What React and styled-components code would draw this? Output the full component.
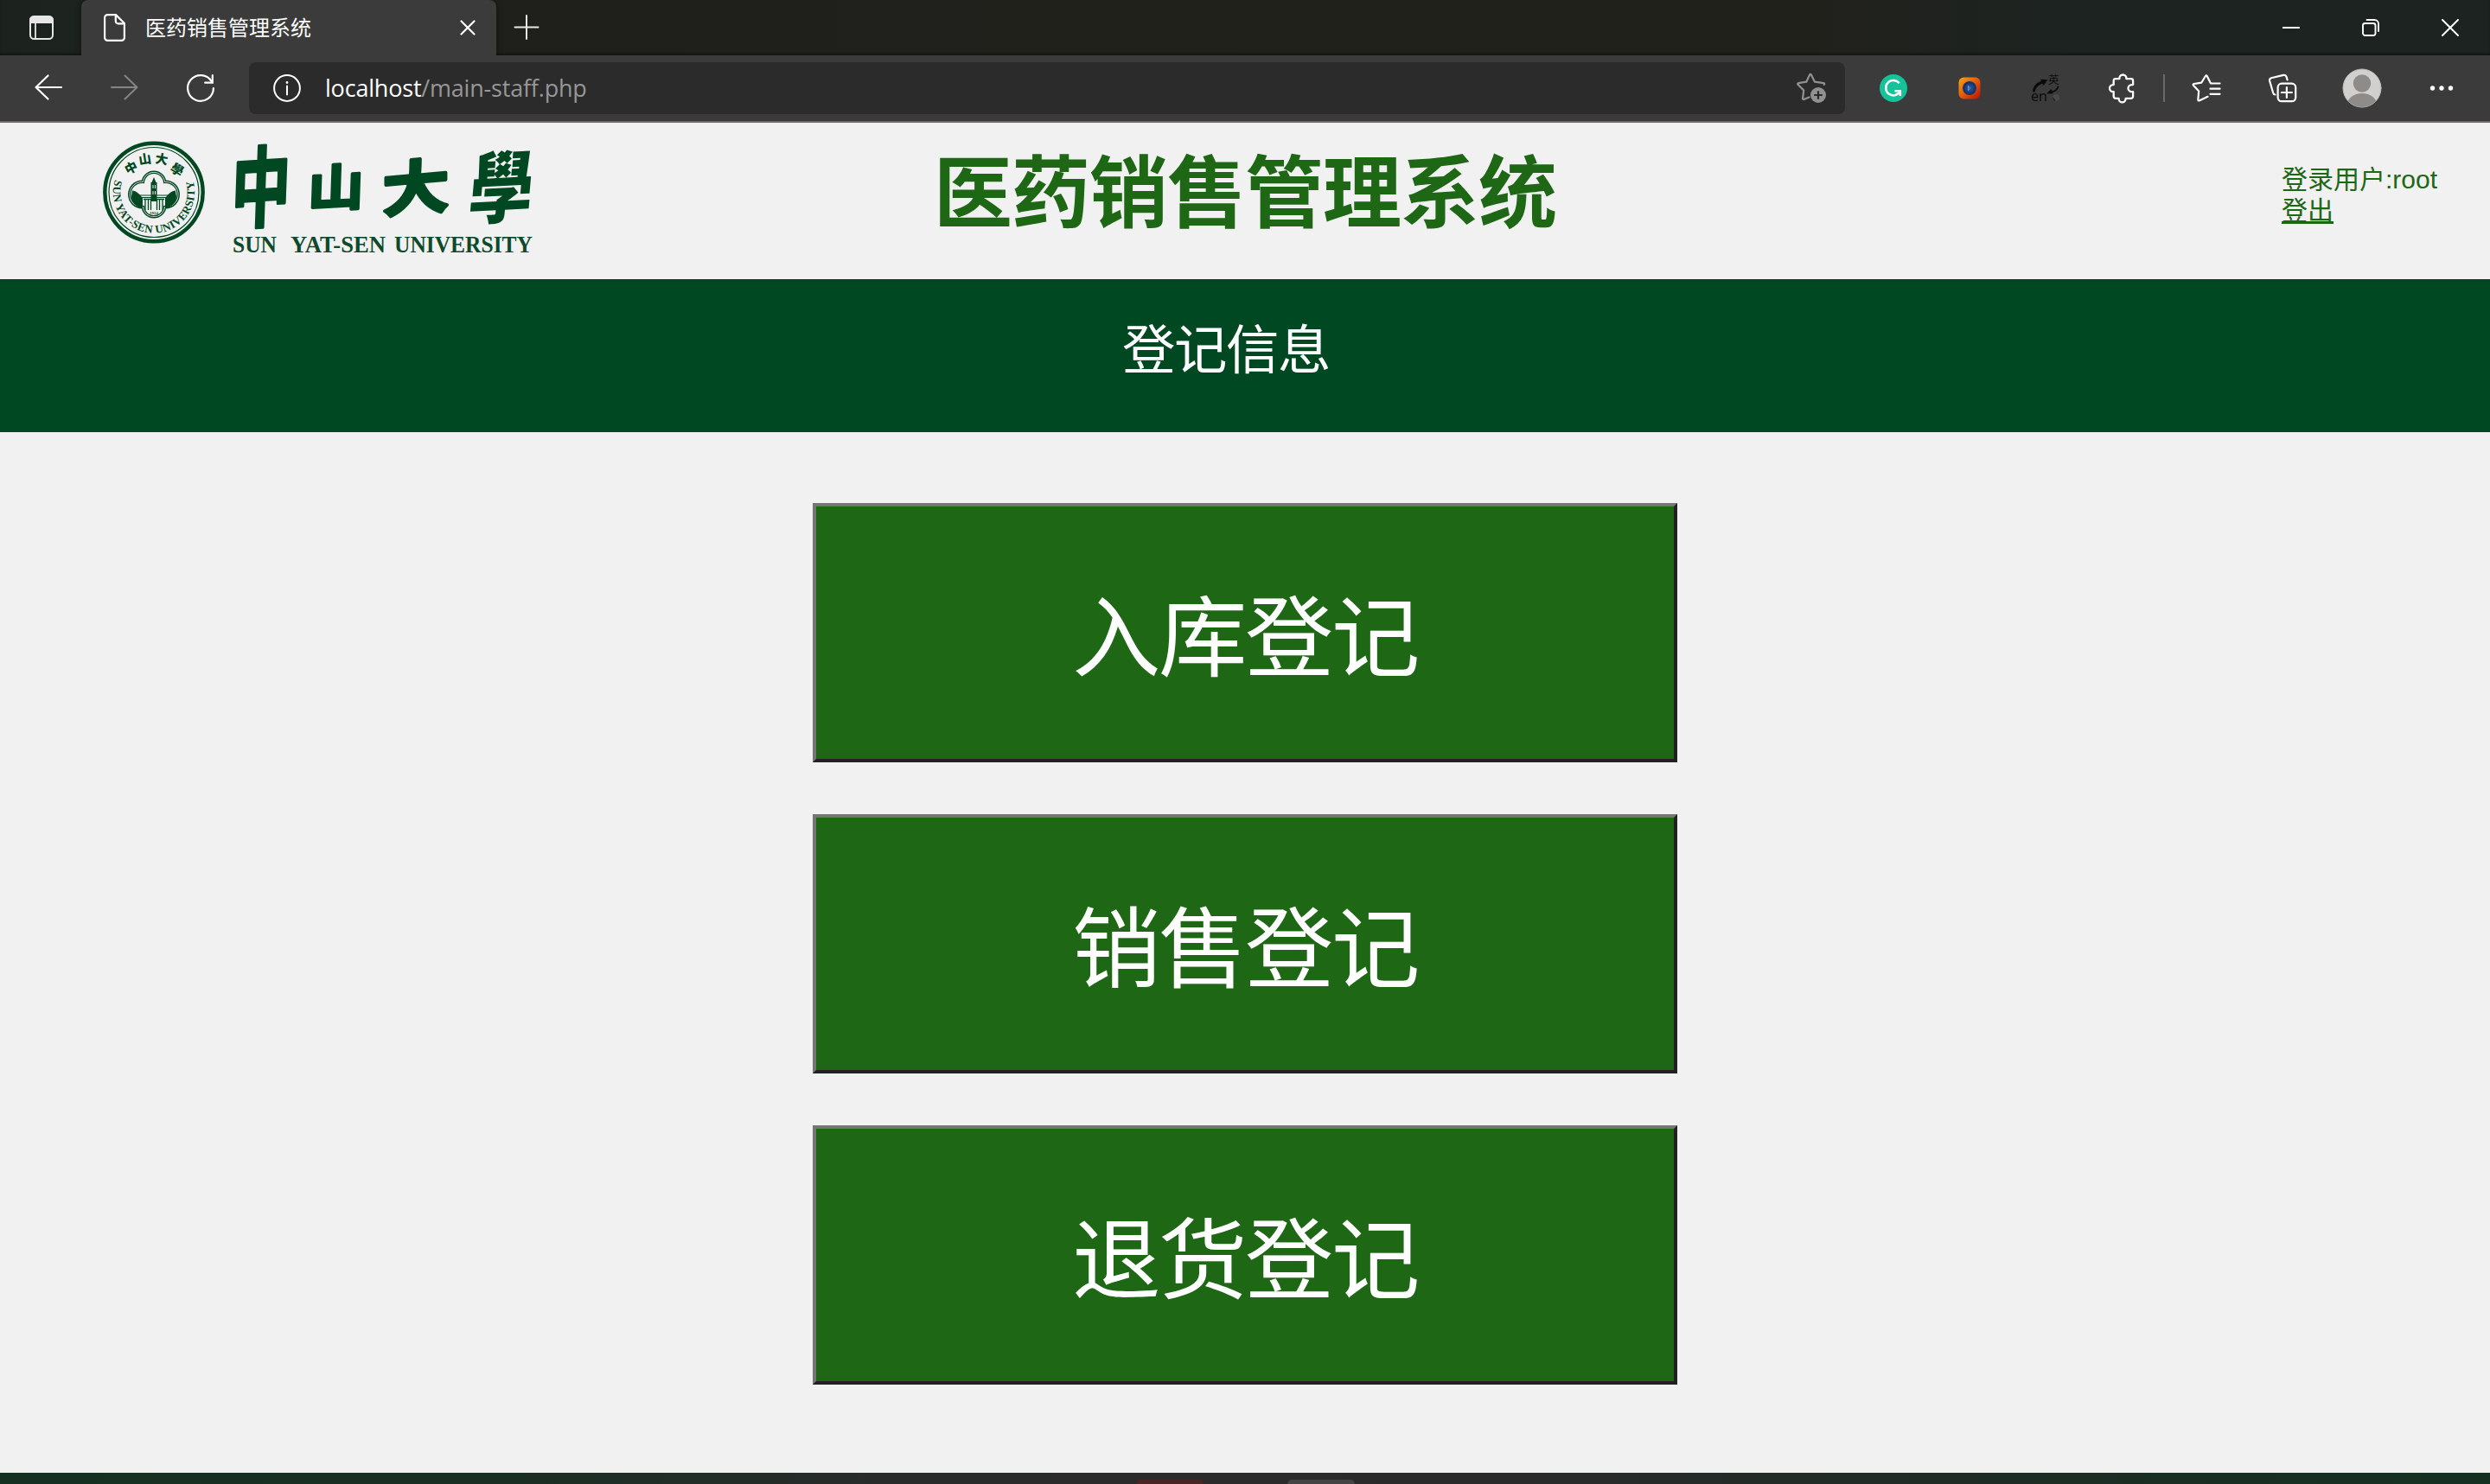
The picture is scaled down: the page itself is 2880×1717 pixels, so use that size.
import React from "react";
import styled, { createGlobalStyle } from "styled-components";

const CJK = '"Noto Sans CJK SC", sans-serif';

const GlobalStyle = createGlobalStyle`
  html, body { margin: 0; padding: 0; background: #f1f1f1; }
  * { box-sizing: border-box; }
  svg { overflow: visible; }
`;

const Screen = styled.div`
  width: 2880px;
  height: 1717px;
  display: flex;
  flex-direction: column;
  overflow: hidden;
  background: #f1f1f1;
`;

/* ---------- browser chrome ---------- */

const TitleBar = styled.div`
  height: 64px;
  flex: none;
  display: flex;
  background: linear-gradient(90deg, #1c231f 0%, #1f201b 20%, #21211b 72%, #1c2321 84%, #1c2321 100%);
  box-shadow: inset 0 -3px 3px -1px rgba(0, 0, 0, 0.4);
`;

const TitleSlot = styled.div`
  width: ${(p) => p.$w}px;
  padding-left: ${(p) => p.$left}px;
  display: flex;
  align-items: center;
`;

const Tab = styled.div`
  width: 480px;
  height: 64px;
  display: flex;
  align-items: center;
  padding: 0 24px 0 26px;
  background: #3b3b3b;
  border-radius: 8px 8px 0 0;
  box-shadow: 0 0 6px rgba(0, 0, 0, 0.5);
`;

const TabTitle = styled.span`
  flex: 1;
  margin-left: 23px;
  padding-bottom: 2px;
  font: 400 24px/32px ${CJK};
  color: #fff;
`;

const Spacer = styled.div`
  flex: 1;
`;

const ToolBar = styled.div`
  height: 78px;
  flex: none;
  display: flex;
  align-items: center;
  padding: 0 12px;
  background: #3b3b3b;
  border-bottom: 2px solid #6b6969;
  position: relative;
`;

const Slot = styled.div`
  width: ${(p) => p.$w || 88}px;
  height: 60px;
  display: flex;
  align-items: center;
  justify-content: center;
`;

const Address = styled.div`
  width: 1846px;
  height: 60px;
  margin: 0 12px;
  padding: 0 20px 0 28px;
  display: flex;
  align-items: center;
  background: #2b2b2b;
  border-radius: 8px;
`;

const Url = styled.span`
  flex: 1;
  margin-left: 28px;
  font: 400 27px/36px "Open Sans", "Noto Sans", sans-serif;
  letter-spacing: -0.2px;
  color: #979797;
`;

const Host = styled.span`
  color: #fff;
`;

const Divider = styled.div`
  width: 2px;
  height: 32px;
  margin: 0 4px;
  background: #6a6a6a;
`;

/* ---------- page ---------- */

const Header = styled.header`
  height: 181px;
  flex: none;
  display: grid;
  grid-template-columns: 1080px 720px 1080px;
`;

const LogoBox = styled.div`
  padding-left: 100px;
`;

const Title = styled.h1`
  margin: 0;
  padding-top: 9px;
  white-space: nowrap;
  font: 700 91px/130px ${CJK};
  letter-spacing: -1px;
  color: #1e6715;
`;

const User = styled.div`
  padding: 48px 0 0 839px;
  font: 400 30px/36px "Liberation Sans", ${CJK};
  color: #1e6715;
`;

const Line = styled.div`
  height: 36px;
  white-space: nowrap;
`;

const Logout = styled.a`
  color: inherit;
  text-decoration: underline;
  text-decoration-thickness: 3px;
  text-underline-offset: 2px;
  text-decoration-skip-ink: none;
`;

const Band = styled.div`
  height: 177px;
  flex: none;
  padding: 34px 0 0 1298px;
  background: #004822;
  font: 400 61.5px/88px ${CJK};
  letter-spacing: -1.5px;
  color: #fff;
`;

const Main = styled.main`
  flex: 1;
  display: flex;
  flex-direction: column;
  align-items: center;
  gap: 60px;
  padding-top: 82px;
`;

const BigButton = styled.button`
  width: 1000px;
  height: 300px;
  padding: 0 0 2px;
  border: 4px solid;
  border-color: #767676 #212121 #212121 #767676;
  background: #1e6715;
  color: #fff;
  font: 400 102.5px/140px ${CJK};
  letter-spacing: -2.5px;
`;

const TaskBar = styled.div`
  height: 13px;
  flex: none;
  display: flex;
  align-items: flex-end;
  padding-left: 1314px;
  gap: 97px;
  background: linear-gradient(90deg, #143021 0%, #1a2e23 20%, #292b2a 36%, #2a2a2a 60%, #1d2c24 80%, #143021 100%);
`;

const TaskItem = styled.div`
  width: 78px;
  height: 5px;
  border-radius: 5px 5px 0 0;
  background: ${(p) => p.$color};
`;

/* ---------- icons ---------- */

const Icon = ({ w = 32, h = 32, sw = 2.2, color = "#fff", children }) => (
  <svg
    width={w}
    height={h}
    viewBox={`0 0 ${w} ${h}`}
    fill="none"
    stroke={color}
    strokeWidth={sw}
    strokeLinecap="round"
    strokeLinejoin="round"
  >
    {children}
  </svg>
);

const TabActionsIcon = () => (
  <Icon w={28} h={28} sw={2} color="#e6e6e6">
    <rect x="1" y="1" width="26" height="26" rx="4.5" />
    <path d="M1 8V5.5A4.5 4.5 0 0 1 5.5 1h17A4.5 4.5 0 0 1 27 5.5V8z" fill="#e6e6e6" />
    <path d="M7 8v18" strokeWidth="1.8" />
  </Icon>
);

const PageIcon = () => (
  <Icon w={25} h={32}>
    <path d="M4.5 1.1H14L23.9 11v16.5a3.4 3.4 0 0 1-3.4 3.4h-16a3.4 3.4 0 0 1-3.4-3.4v-23a3.4 3.4 0 0 1 3.4-3.4z" />
    <path d="M13.8 1.5V8.500a2.800 2.800 0 0 0 2.800 2.800h7" />
  </Icon>
);

const BackIcon = () => (
  <Icon w={32} h={30}>
    <path d="M15.500 .5L1.500 14l14 13.500M1.500 14H31" />
  </Icon>
);

const ForwardIcon = () => (
  <Icon w={32} h={30} color="#858585" sw={2}>
    <path d="M16.500 .5L30.500 14l-14 13.500M30.500 14H1" />
  </Icon>
);

const RefreshIcon = () => (
  <Icon>
    <path d="M30.900 16A14.900 14.900 0 1 1 29 8.700" />
    <path d="M29.800 1v8.700h-8.600" strokeLinejoin="miter" />
  </Icon>
);

const InfoIcon = () => (
  <Icon sw={2}>
    <circle cx="16" cy="16" r="14.900" />
    <path d="M16 13.500V23.500" />
    <circle cx="16" cy="9.500" r="0.600" fill="#fff" strokeWidth="1.600" />
  </Icon>
);

const AddFavoriteIcon = () => (
  <Icon w={36} h={36} color="#919191">
    <path d="M14.500 28.500L8.500 31a1 1 0 0 1-1.400-1L8.200 20.500 1.500 13.800a1 1 0 0 1 .6-1.700L11.300 10.700 15.100 2.500a1 1 0 0 1 1.800 0L21 10.700l10.200 1.400a1 1 0 0 1 .6 1.800" />
    <circle cx="25" cy="26" r="9" fill="#919191" stroke="none" />
    <path d="M25 21.200v9.600M20.200 26h9.600" stroke="#2b2b2b" strokeLinecap="butt" />
  </Icon>
);

const GrammarIcon = () => (
  <Icon>
    <circle cx="16" cy="16" r="16" fill="#15c39a" stroke="none" />
    <path d="M22.700 10.200A8.700 8.700 0 1 0 23.700 19.500" strokeWidth="2.600" strokeLinecap="butt" />
    <path d="M17.500 19.200h6.300v5.800" strokeWidth="2.600" strokeLinecap="butt" strokeLinejoin="miter" />
  </Icon>
);

const CameraIcon = () => (
  <Icon w={26} h={26} sw={1.5}>
    <defs>
      <linearGradient id="cam" x1="0" y1="0" x2="1" y2="1">
        <stop offset="0" stopColor="#f8a51a" />
        <stop offset="0.5" stopColor="#e35a0c" />
        <stop offset="1" stopColor="#b80e06" />
      </linearGradient>
    </defs>
    <rect x="0.500" y="0.500" width="25" height="25" rx="6" fill="url(#cam)" stroke="none" />
    <circle cx="13" cy="13" r="8" fill="#1c3464" stroke="none" />
    <circle cx="13" cy="13" r="4.700" fill="#1c4b94" stroke="#20407c" />
    <path d="M11.800 10.600a2.600 2.600 0 0 1 0 4.800z" stroke="#6f9ad0" strokeWidth="1" />
  </Icon>
);

const TranslateIcon = () => (
  <Icon w={34} h={34} color="#0a0a0a">
    <text x="20" y="12" fontSize="12.500" fill="#0a0a0a" stroke="none" fontFamily='"Noto Sans CJK SC", sans-serif'>英</text>
    <text x="0" y="32" fontSize="16" fill="#0a0a0a" stroke="none" fontFamily='"Open Sans", sans-serif'>en</text>
    <path d="M3.500 20C4 15.500 8 12 13 10" strokeWidth="3" />
    <path d="M11 6.800L19.500 7.200 14.500 14z" fill="#0a0a0a" stroke="none" />
    <path d="M31.500 15.500C30.500 19 27 20.800 23 22" strokeWidth="1.800" />
    <path d="M23.500 18L18 23.500l7.500-.3z" fill="#0a0a0a" stroke="none" />
    <circle cx="29" cy="28" r="4" fill="#4d4a43" stroke="none" />
    <path d="M25.300 27a4 4 0 0 0 3.500 5z" fill="#1d1c1a" stroke="none" />
  </Icon>
);

const PuzzleIcon = () => (
  <Icon w={30} h={34} sw={2.300}>
    <path d="M8 6.200h4.400V5.500a4 4 0 0 1 8 0v.7h5.400a2.300 2.300 0 0 1 2.300 2.300v4.600h-1.600a4 4 0 0 0 0 8h1.600v5.400a2.300 2.300 0 0 1-2.300 2.300H19.600v.5a4 4 0 0 1-8 0v-.5H8a2.300 2.300 0 0 1-2.300-2.300V21.100H5a4 4 0 0 1 0-8h.7V8.500A2.300 2.300 0 0 1 8 6.200z" />
  </Icon>
);

const FavoritesIcon = () => (
  <Icon w={34} h={34}>
    <path d="M18.500 26.800L8.700 31.400a1 1 0 0 1-1.400-1L8.200 20.500 1.900 13.700a1 1 0 0 1 .5-1.700L11.200 10.700 15.900 3a1 1 0 0 1 1.800 0L22 11.500H32.500M21.500 17.700h11M21.500 23.800h11" />
  </Icon>
);

const CollectionsIcon = () => (
  <Icon w={34} h={34}>
    <path d="M8.500 24.500A2.500 2.500 0 0 1 6.200 22.500L2.100 8.500A2.800 2.800 0 0 1 4 5.200L18 1.900a3 3 0 0 1 3.600 2L22.600 7.500" />
    <rect x="11.600" y="11.600" width="20.600" height="20.600" rx="4.500" />
    <path d="M21.900 16v12M15.900 22h12" />
  </Icon>
);

const AvatarIcon = () => (
  <Icon w={46} h={46}>
    <clipPath id="avatarClip">
      <circle cx="23" cy="23" r="22" />
    </clipPath>
    <circle cx="23" cy="23" r="22" fill="#d2d0ce" stroke="#bfbdbb" strokeWidth="1" />
    <g clipPath="url(#avatarClip)" stroke="none" fill="#8f8b88">
      <circle cx="23" cy="17.500" r="10.200" />
      <ellipse cx="23" cy="43" rx="17.500" ry="14" />
    </g>
  </Icon>
);

const MoreIcon = () => (
  <Icon>
    <g fill="#fff" stroke="none">
      <circle cx="5.500" cy="16" r="2.700" />
      <circle cx="16" cy="16" r="2.700" />
      <circle cx="26.500" cy="16" r="2.700" />
    </g>
  </Icon>
);

/* ---------- university logo ---------- */

const GREEN = "#004822";

const LogoSvg = styled.svg`
  display: block;
`;

const lobes = [
  [178, 212, 14.5],
  [178, 238, 14.5],
  [164.500, 225, 16.500],
  [191.500, 225, 16.500],
];

const Foil = ({ inset, fill }) =>
  lobes.map(([x, y, r], i) => <circle key={i} cx={x} cy={y} r={r - inset} fill={fill} />);

const sealChars = [
  ["中", 151.500, 194, -28],
  ["山", 167.500, 184, -9],
  ["大", 187, 184, 9],
  ["學", 205, 196, 30],
];

const nameChars = [
  { c: "中", x: 302, y: 217, sx: 0.74, sy: 1.1, skew: -2, rot: -4, weight: 700, stroke: 3 },
  { c: "山", x: 388.500, y: 217, sx: 0.7, sy: 0.62, skew: -2, rot: -3, weight: 700, stroke: 5 },
  { c: "大", x: 481, y: 217, sx: 0.84, sy: 0.74, skew: 0, rot: -5, weight: 700, stroke: 5 },
  { c: "學", x: 580, y: 217, sx: 0.8, sy: 0.98, skew: -5, rot: -3, weight: 900, stroke: 0 },
];

const UniversityLogo = () => (
  <LogoSvg width="540" height="181" viewBox="100 142 540 181">
    <circle cx="178" cy="222.500" r="56.700" fill="none" stroke={GREEN} strokeWidth="4.400" />
    <circle cx="178" cy="222.500" r="52" fill="none" stroke={GREEN} strokeWidth="1.200" />
    <path id="sealArc" d="M133.400 207A47.200 47.200 0 1 0 222.600 207" fill="none" />
    <text fontFamily='"Liberation Serif", serif' fontWeight="700" fontSize="13" fill={GREEN}>
      <textPath href="#sealArc" textLength="176" startOffset="1">SUN YAT-SEN UNIVERSITY</textPath>
    </text>
    {sealChars.map(([c, x, y, r]) => (
      <text
        key={c}
        transform={`translate(${x} ${y}) rotate(${r})`}
        textAnchor="middle"
        y="5.500"
        fontSize="14.500"
        fontWeight="900"
        fontFamily='"Noto Sans CJK TC", sans-serif'
        fill={GREEN}
      >
        {c}
      </text>
    ))}
    <Foil inset={0} fill={GREEN} />
    <Foil inset={1.500} fill="#f1f1f1" />
    <Foil inset={2.200} fill={GREEN} />
    <Foil inset={3.500} fill="#f1f1f1" />
    <path d="M153 220.500c4 0 9 4 12 9v11c-7 0-13-6-13-13z M203 220.500c-4 0-9 4-12 9v11c7 0 13-6 13-13z" fill={GREEN} />
    <path d="M155 226H201M155 228.500H201" stroke={GREEN} strokeWidth="1" />
    <path d="M178 205l2.500 6h-5z M174.500 211h7v22h-7z" fill={GREEN} />
    <path d="M177 214v4M179.500 214v4M177 221v4M179.500 221v4" stroke="#f1f1f1" strokeWidth="1" />
    <path d="M168 243v-12M171.500 243v-12M174.500 243v-12M181.500 243v-12M184.500 243v-12M188 243v-12M166 230.500h24" stroke={GREEN} strokeWidth="1.300" />
    <text x="178" y="248" textAnchor="middle" fontSize="5" fontWeight="700" fontFamily='"Liberation Serif", serif' fill={GREEN}>1924</text>
    {nameChars.map(({ c, x, y, sx, sy, skew, rot, weight, stroke }) => (
      <text
        key={c}
        transform={`translate(${x} ${y}) skewX(${skew}) skewY(${rot}) scale(${sx} ${sy})`}
        textAnchor="middle"
        y="34"
        fontSize="92"
        fontWeight={weight}
        fontFamily='"Noto Sans CJK TC", sans-serif'
        fill={GREEN}
        stroke={GREEN}
        strokeWidth={stroke}
        strokeLinejoin="round"
      >
        {c}
      </text>
    ))}
    <g fontFamily='"Liberation Serif", serif' fontWeight="700" fontSize="26.500" fill="#0d4a2a">
      <text x="269" y="291.500" textLength="51" lengthAdjust="spacingAndGlyphs">SUN</text>
      <text x="336" y="291.500" textLength="110" lengthAdjust="spacingAndGlyphs">YAT-SEN</text>
      <text x="456" y="291.500" textLength="160" lengthAdjust="spacingAndGlyphs">UNIVERSITY</text>
    </g>
  </LogoSvg>
);

const actions = ["入库登记", "销售登记", "退货登记"];

export default function App() {
  return (
    <Screen>
      <GlobalStyle />
      <TitleBar>
        <TitleSlot $w={94} $left={34}>
          <TabActionsIcon />
        </TitleSlot>
        <Tab>
          <PageIcon />
          <TabTitle>医药销售管理系统</TabTitle>
          <Icon w={18} h={18}>
            <path d="M1.500 1.500l15 15M16.500 1.500l-15 15" />
          </Icon>
        </Tab>
        <TitleSlot $w={72} $left={21}>
          <Icon w={28} h={28} sw={2} color="#e8e8e8">
            <path d="M14 0v27M.5 13.500h27" />
          </Icon>
        </TitleSlot>
        <Spacer />
        <TitleSlot $w={92} $left={36}>
          <Icon w={20} h={20} sw={2}>
            <path d="M0 10h20" strokeLinecap="butt" />
          </Icon>
        </TitleSlot>
        <TitleSlot $w={92} $left={36}>
          <Icon w={20} h={20} sw={1.900}>
            <rect x="1" y="5" width="14.500" height="14" rx="2.500" />
            <path d="M5.500 1h9A4.500 4.500 0 0 1 19 5.500V14" />
          </Icon>
        </TitleSlot>
        <TitleSlot $w={92} $left={36}>
          <Icon w={20} h={20} sw={2}>
            <path d="M1 1l18 18M19 1L1 19" />
          </Icon>
        </TitleSlot>
      </TitleBar>

      <ToolBar>
        <Slot><BackIcon /></Slot>
        <Slot><ForwardIcon /></Slot>
        <Slot><RefreshIcon /></Slot>
        <Address>
          <InfoIcon />
          <Url><Host>localhost</Host>/main-staff.php</Url>
          <AddFavoriteIcon />
        </Address>
        <Slot><GrammarIcon /></Slot>
        <Slot><CameraIcon /></Slot>
        <Slot><TranslateIcon /></Slot>
        <Slot><PuzzleIcon /></Slot>
        <Divider />
        <Slot><FavoritesIcon /></Slot>
        <Slot><CollectionsIcon /></Slot>
        <Slot $w={96}><AvatarIcon /></Slot>
        <Slot><MoreIcon /></Slot>
      </ToolBar>

      <Header>
        <LogoBox><UniversityLogo /></LogoBox>
        <Title>医药销售管理系统</Title>
        <User>
          <Line>登录用户:root</Line>
          <Line><Logout>登出</Logout></Line>
        </User>
      </Header>
      <Band>登记信息</Band>
      <Main>
        {actions.map((label) => (
          <BigButton key={label}>{label}</BigButton>
        ))}
      </Main>
      <TaskBar>
        <TaskItem $color="#4a2526" />
        <TaskItem $color="#444444" />
      </TaskBar>
    </Screen>
  );
}
